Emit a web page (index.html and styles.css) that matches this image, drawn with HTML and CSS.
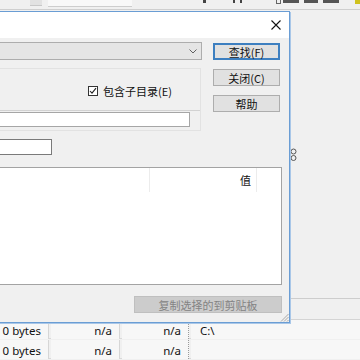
FILE: index.html
```html
<!DOCTYPE html>
<html>
<head>
<meta charset="utf-8">
<link rel="stylesheet" href="styles.css">
</head>
<body>
<div class="app">
  <div class="toolbar">
    <span class="tb-btn"></span>
    <span class="tb-field"></span>
    <span class="tb-mark m1"></span>
    <span class="tb-mark m2"></span>
    <span class="tb-mark m3"></span>
    <span class="tb-box"></span>
    <span class="tb-mark m4"></span>
    <span class="tb-mark m5"></span>
    <span class="tb-mark m6"></span>
    <span class="tb-yellow"></span>
  </div>
  <div class="workspace">
    <div class="ws-left"></div>
    <div class="ws-right">
      <svg class="splitter-grip" width="7" height="14" viewBox="0 0 7 14"><circle cx="3.5" cy="3.5" r="2.5" fill="none" stroke="#555" stroke-width="1"/><circle cx="3.5" cy="10" r="2.5" fill="none" stroke="#555" stroke-width="1"/></svg>
      <div class="ws-foot"></div>
    </div>
  </div>
  <div class="table">
    <div class="row">
      <div class="cell num">0 bytes</div>
      <div class="cell num">n/a</div>
      <div class="cell num dotted">n/a</div>
      <div class="cell path">C:\</div>
    </div>
    <div class="row">
      <div class="cell num">0 bytes</div>
      <div class="cell num">n/a</div>
      <div class="cell num dotted">n/a</div>
      <div class="cell path"></div>
    </div>
  </div>
</div>

<div class="dialog">
  <div class="titlebar">
    <svg class="close" width="10" height="10" viewBox="0 0 10 10"><path d="M0.5 0.5 L9.5 9.5 M9.5 0.5 L0.5 9.5" stroke="#111" stroke-width="1.1"/></svg>
  </div>
  <div class="dlg-body">
    <div class="top">
      <div class="left">
        <div class="combo">
          <svg width="8" height="5" viewBox="0 0 8 5"><path d="M0.5 0.5 L4 4 L7.5 0.5" fill="none" stroke="#606060" stroke-width="1"/></svg>
        </div>
        <div class="group">
          <div class="opt">
            <span class="chk"><svg width="8" height="8" viewBox="0 0 8 8"><path d="M1 4 L3 6.2 L7 1.2" fill="none" stroke="#222" stroke-width="1.1"/></svg></span>
            <span class="opt-label">包含子目录(E)</span>
          </div>
          <div class="inrow"><div class="input wide"></div></div>
        </div>
        <div class="input small"></div>
      </div>
      <div class="btns">
        <div class="btn default">查找(F)</div>
        <div class="btn">关闭(C)</div>
        <div class="btn">帮助</div>
      </div>
    </div>
    <div class="list">
      <div class="list-head">
        <div class="col"></div>
        <div class="col val">值</div>
        <div class="col last"></div>
      </div>
    </div>
    <div class="footer">
      <div class="btn disabled">复制选择的到剪贴板</div>
    </div>
    <svg class="grip" width="9" height="9" viewBox="0 0 9 9"><path d="M8.5 1 L1 8.5 M8.5 4 L4 8.5 M8.5 7 L7 8.5" stroke="#a8a8a8" stroke-width="1"/></svg>
  </div>
</div>
</body>
</html>
```
FILE: styles.css
```css
* { box-sizing: border-box; }
html, body { margin: 0; padding: 0; }
body {
  width: 360px;
  height: 360px;
  overflow: hidden;
  position: relative;
  background: #f0f0f0;
  font-family: "Noto Sans", "Noto Sans CJK SC", sans-serif;
  font-size: 11px;
  color: #000;
}

/* background application */
.app { display: flex; flex-direction: column; height: 360px; }
.toolbar {
  height: 10px;
  border-bottom: 1px solid #cfcfcf;
  display: flex;
  align-items: flex-start;
}
.tb-btn { width: 12px; height: 6px; margin-left: 30px; background: #e2e2e2; border-bottom: 1px solid #c8c8c8; }
.tb-field { width: 84px; height: 7px; margin-left: 6px; background: #f8f8f8; border-bottom: 1px solid #cdcdcd; }
.tb-mark { height: 3px; background: #444; }
.m1 { width: 3px; margin-left: 71px; }
.m2 { width: 2px; margin-left: 27px; }
.m3 { width: 2px; margin-left: 5px; }
.tb-box { width: 5px; height: 4px; margin-left: 34px; border: 1px solid #666; border-top: none; }
.m4 { width: 16px; margin-left: 2px; background: #555; }
.m5 { width: 14px; margin-left: 5px; background: #555; }
.m6 { width: 16px; margin-left: 5px; background: #555; }
.tb-yellow { width: 5px; height: 4px; margin-left: 16px; background: #cfc21e; }

.workspace { height: 312px; display: flex; }
.ws-left { flex: 1; }
.ws-right {
  width: 70px;
  display: flex;
  flex-direction: column;
}
.splitter-grip { margin-top: 138px; margin-left: 0; }
.ws-foot { margin-top: auto; height: 21px; border-top: 1px solid #cdcdcd; }

.table { border-top: 1px solid #d4d4d4; }
.row {
  display: grid;
  grid-template-columns: 49px 69px 67px 1fr;
  column-gap: 2px;
  height: 19px;
  border-bottom: 1px solid #d9d9d9;
  margin-bottom: 1px;
}
.cell {
  background: #f7f7f7;
  line-height: 17px;
  padding-top: 2px;
  font-size: 11.5px;
  color: #111;
  white-space: nowrap;
  border-right: 1px solid #d6d6d6;
}
.cell.num { text-align: right; padding-right: 7px; }
.cell.dotted { border-right: 1px dotted #9a9a9a; }
.cell.path { padding-left: 9px; border-right: none; }

/* dialog window */
.dialog {
  position: absolute;
  left: -100px;
  top: 11px;
  width: 390px;
  height: 312px;
  border: 1px solid #6a9dd4;
  box-shadow: 1px 1px 0 #a9c7e8;
  display: flex;
  flex-direction: column;
  font-family: "Noto Sans CJK SC", "Noto Sans", sans-serif;
}
.titlebar {
  height: 28px;
  background: #fff;
  display: flex;
  justify-content: flex-end;
  align-items: flex-start;
  padding: 8px 8px 0 0;
}
.dlg-body {
  flex: 1;
  position: relative;
  background: #f0f0f0;
  padding: 0 7px 9px 11px;
  display: flex;
  flex-direction: column;
}
.top { display: flex; gap: 11px; padding-right: 2px; }
.left { flex: 1; display: flex; flex-direction: column; padding-top: 4px; }
.combo {
  height: 18px;
  border: 1px solid #adadad;
  background: #e5e5e5;
  display: flex;
  justify-content: flex-end;
  align-items: center;
  padding-right: 4px;
}
.group {
  margin-top: 8px;
  margin-right: 1px;
  height: 63px;
  border: 1px solid #e2e2e2;
  display: flex;
  flex-direction: column;
}
.opt {
  height: 42px;
  border-bottom: 1px solid #d2d2d2;
  display: flex;
  align-items: center;
  justify-content: flex-end;
  padding-right: 28px;
  padding-top: 3px;
}
.chk {
  width: 10px;
  height: 10px;
  border: 1px solid #333;
  background: #fff;
  display: flex;
  align-items: center;
  justify-content: center;
  margin-right: 5px;
}
.opt-label { font-size: 11px; line-height: 12px; color: #111; }
.inrow { padding: 1px 10px 0 0; }
.input { background: #fff; }
.input.wide { height: 15px; border: 1px solid #a6a6a6; }
.input.small { margin-top: 8px; width: 140px; height: 16px; border: 1px solid #7a7a7a; }

.btns { width: 67px; display: flex; flex-direction: column; gap: 9px; padding-top: 5px; }
.btn {
  height: 17px;
  border: 1px solid #adadad;
  background: #e1e1e1;
  display: flex;
  align-items: center;
  justify-content: center;
  font-size: 11px;
  color: #111;
  white-space: nowrap;
}
.btn.default { border: 2px solid #3d7fc0; }

.list {
  margin-top: 12px;
  height: 118px;
  border: 1px solid #a3a3a3;
  background: #fff;
}
.list-head {
  display: grid;
  grid-template-columns: 1fr 107px 24px;
  height: 22px;
}
.col { border-right: 1px solid #ececec; }
.col.last { border-right: none; }
.col.val {
  text-align: right;
  padding-right: 5px;
  line-height: 24px;
  font-size: 11px;
  color: #111;
}
.footer { margin-top: 11px; display: flex; justify-content: flex-end; }
.btn.disabled {
  width: 148px;
  background: #cccccc;
  border-color: #bfbfbf;
  color: #838383;
}
.grip { position: absolute; right: 0; bottom: 0; }
```
